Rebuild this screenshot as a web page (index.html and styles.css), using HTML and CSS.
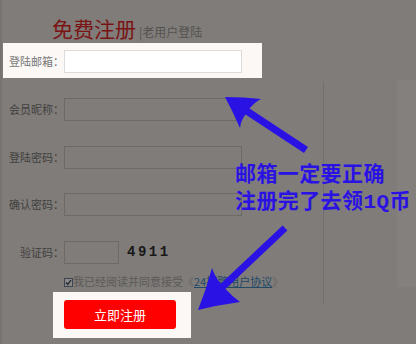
FILE: index.html
```html
<!DOCTYPE html>
<html lang="zh-CN">
<head>
    <meta charset="UTF-8">
    <meta name="viewport" content="width=device-width, initial-scale=1.0">
    <title>免费注册</title>
    <link rel="stylesheet" href="styles.css">
</head>
<body>
    <div class="page">
        <div class="form">
            <div class="head">
                <h1 class="title">免费注册</h1>
                <span class="switch">|老用户登陆</span>
            </div>

            <div class="rows">
                <div class="row on">
                    <label class="label">登陆邮箱：</label>
                    <input class="field" type="text">
                </div>
                <div class="row">
                    <label class="label">会员昵称：</label>
                    <input class="field" type="text">
                </div>
                <div class="row">
                    <label class="label">登陆密码：</label>
                    <input class="field" type="password">
                </div>
                <div class="row">
                    <label class="label">确认密码：</label>
                    <input class="field" type="password">
                </div>
                <div class="row code">
                    <label class="label">验证码：</label>
                    <input class="field" type="text">
                    <span class="captcha">4911</span>
                </div>
            </div>

            <div class="agree">
                <svg class="check" width="9" height="9" viewBox="0 0 9 9">
                    <rect x="0.5" y="0.5" width="8" height="8" fill="#8b8885" stroke="#3d4350"/>
                    <path d="M2 4.5 L3.8 6.5 L7 2.2" fill="none" stroke="#1f2a3a" stroke-width="1.4"/>
                </svg><span>我已经阅读并同意接受</span><span class="quote">《</span><a class="terms" href="#">24招聘用户协议</a><span class="quote">》</span>
            </div>

            <div class="btn-box">
                <button class="btn">立即注册</button>
            </div>
        </div>

        <div class="side">
            <div class="divider"></div>
            <div class="spacer"></div>
            <div class="panel"></div>
        </div>

        <!-- annotation drawn on top of the page -->
        <svg class="arrows" width="416" height="344" viewBox="0 0 416 344">
            <path d="M308,147 L249.5,108.5 Q255,102 261,99 Q244,97 225,97 Q233,112 240,128 Q241,120 245.5,114.5 L304,153 Z" fill="#2b12e4"/>
            <path d="M282.6,225.4 L287.4,230.5 L225.5,288.9 Q232,296 240,302 Q218,305 198,310 Q206,290 212,268 Q215,277 220.7,283.8 Z" fill="#2b12e4"/>
        </svg>
        <div class="note">
            <div>邮箱一定要正确</div>
            <div>注册完了去领1Q币</div>
        </div>
    </div>
</body>
</html>
```

FILE: styles.css
```css
body {
    margin: 0;
    background-color: #7f7c79;
    font-family: "Noto Sans CJK SC", sans-serif;
}

.page {
    position: relative;
    display: flex;
    height: 344px;
    padding-left: 3px;
    box-sizing: border-box;
    box-shadow: inset 2px 0 #767370;
    overflow: hidden;
}

.form {
    width: 320px;
}

.head {
    display: flex;
    align-items: baseline;
    height: 43px;
    padding: 17px 0 0 49px;
    box-sizing: border-box;
}

.title {
    margin: 0;
    font-size: 21px;
    line-height: 22px;
    font-weight: 400;
    color: #7a1414;
}

.switch {
    margin-left: 3px;
    font-size: 12px;
    color: #555351;
}

.rows {
    display: flex;
    flex-direction: column;
    gap: 12.75px;
}

.row {
    display: flex;
    align-items: flex-start;
    width: 259px;
    height: 35px;
    padding-top: 7px;
    box-sizing: border-box;
}

.row.on {
    background-color: #fbf8f6;
}

.label {
    width: 61px;
    text-align: right;
    font-size: 11px;
    line-height: 23px;
    color: #42403e;
}

.on .label {
    color: #777;
}

.field {
    width: 178px;
    height: 23px;
    margin: 0;
    padding: 0;
    border: 1px solid #6c6967;
    box-sizing: border-box;
    background-color: transparent;
}

.on .field {
    border-color: #dcdcdc;
    background-color: #fff;
}

.code .field {
    width: 55px;
}

.captcha {
    margin-left: 8px;
    font-family: "Liberation Mono", monospace;
    font-weight: 700;
    font-size: 14px;
    letter-spacing: 2.5px;
    line-height: 23px;
    color: #181818;
}

.agree {
    margin-top: 4px;
    padding-left: 61px;
    font-size: 11px;
    line-height: 16px;
    color: #5c5a58;
    white-space: nowrap;
}

.check {
    vertical-align: -1px;
}

.quote {
    color: #6a6866;
}

.terms {
    color: #1f4a68;
    text-decoration: underline;
}

.btn-box {
    width: 138px;
    margin: 3px 0 0 50px;
    padding: 8px 15px 9px 11px;
    box-sizing: border-box;
    background-color: #fbf8f6;
}

.btn {
    display: block;
    width: 112px;
    height: 29px;
    border: none;
    border-radius: 3px;
    background-color: #fe0000;
    color: #fff;
    font-family: inherit;
    font-size: 13px;
    cursor: pointer;
}

.side {
    flex: 1;
    display: flex;
    align-items: flex-start;
    margin-top: 80px;
}

.divider {
    width: 1px;
    height: 223px;
    margin-top: 2px;
    background-color: #72706d;
}

.spacer {
    flex: 1;
}

.panel {
    width: 19px;
    height: 207px;
    background-color: #83807d;
}

.arrows {
    position: absolute;
    left: 0;
    top: 0;
    pointer-events: none;
}

.note {
    position: absolute;
    left: 235px;
    top: 162px;
    font-family: "Liberation Mono", "Noto Sans CJK SC", monospace;
    font-size: 21px;
    line-height: 27px;
    font-weight: 700;
    letter-spacing: 0.4px;
    color: #2b12e4;
    white-space: nowrap;
}
```
